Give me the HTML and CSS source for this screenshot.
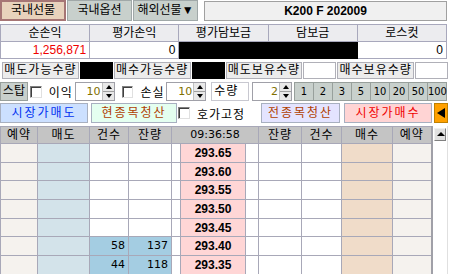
FILE: index.html
```html
<!DOCTYPE html>
<html lang="ko">
<head>
  <meta charset="UTF-8" />
  <title>K200 F 주문</title>
  <link rel="stylesheet" href="styles.css">
</head>
<body>
<div class="screen">

  <div class="tabs">
    <div class="tab tab-on">국내선물</div>
    <div class="tab">국내옵션</div>
    <div class="tab">해외선물▼</div>
    <div class="code">K200 F 202009</div>
  </div>

  <table class="summary">
    <tr><th>순손익</th><th>평가손익</th><th>평가담보금</th><th>담보금</th><th>로스컷</th></tr>
    <tr>
      <td class="loss">1,256,871</td>
      <td>0</td>
      <td class="masked" colspan="2"></td>
      <td>0</td>
    </tr>
  </table>

  <div class="qty-row">
    <span class="qty-label">매도가능수량</span><span class="qty-box masked"></span>
    <span class="qty-label">매수가능수량</span><span class="qty-box masked"></span>
    <span class="qty-label">매도보유수량</span><span class="qty-box"></span>
    <span class="qty-label">매수보유수량</span><span class="qty-box"></span>
  </div>

  <div class="stop-row">
    <div class="btn-gray stop">스탑</div>
    <span class="check"></span>
    <span class="txt">이익</span>
    <span class="spin"><span class="spin-val">10</span><span class="spin-btn"><i class="up"></i><i class="down"></i></span></span>
    <span class="check"></span>
    <span class="txt">손실</span>
    <span class="spin"><span class="spin-val">10</span><span class="spin-btn"><i class="up"></i><i class="down"></i></span></span>
    <span class="qty-name">수량</span>
    <span class="spin"><span class="spin-val">2</span><span class="spin-btn"><i class="up"></i><i class="down"></i></span></span>
    <div class="qty-keys">
      <div class="btn-gray key">1</div>
      <div class="btn-gray key">2</div>
      <div class="btn-gray key">3</div>
      <div class="btn-gray key">5</div>
      <div class="btn-gray key">10</div>
      <div class="btn-gray key">20</div>
      <div class="btn-gray key">50</div>
      <div class="btn-gray key">100</div>
    </div>
  </div>

  <div class="order-row">
    <div class="order sell-market">시장가매도</div>
    <div class="order clear-one">현종목청산</div>
    <span class="check"></span>
    <span class="txt fix">호가고정</span>
    <div class="order clear-all">전종목청산</div>
    <div class="order buy-market">시장가매수</div>
    <div class="arrow-btn"><i></i></div>
  </div>

  <div class="book-wrap">
    <table class="book">
      <colgroup>
        <col style="width:37px"><col style="width:52px"><col style="width:39px"><col style="width:43px">
        <col style="width:9px"><col style="width:65px"><col style="width:13px">
        <col style="width:43px"><col style="width:40px"><col style="width:51px"><col style="width:39px">
      </colgroup>
      <tr>
        <th>예약</th><th>매도</th><th>건수</th><th>잔량</th>
        <th colspan="3" class="time">09:36:58</th>
        <th>잔량</th><th>건수</th><th>매수</th><th>예약</th>
      </tr>
      <tr><td class="rsv"></td><td class="ask"></td><td></td><td></td><td></td><td class="price">293.65</td><td></td><td></td><td></td><td class="bid"></td><td class="rsv"></td></tr>
      <tr><td class="rsv"></td><td class="ask"></td><td></td><td></td><td></td><td class="price">293.60</td><td></td><td></td><td></td><td class="bid"></td><td class="rsv"></td></tr>
      <tr><td class="rsv"></td><td class="ask"></td><td></td><td></td><td></td><td class="price">293.55</td><td></td><td></td><td></td><td class="bid"></td><td class="rsv"></td></tr>
      <tr><td class="rsv"></td><td class="ask"></td><td></td><td></td><td></td><td class="price">293.50</td><td></td><td></td><td></td><td class="bid"></td><td class="rsv"></td></tr>
      <tr><td class="rsv"></td><td class="ask"></td><td></td><td></td><td></td><td class="price">293.45</td><td></td><td></td><td></td><td class="bid"></td><td class="rsv"></td></tr>
      <tr><td class="rsv"></td><td class="ask"></td><td class="fill">58</td><td class="fill">137</td><td></td><td class="price">293.40</td><td></td><td></td><td></td><td class="bid"></td><td class="rsv"></td></tr>
      <tr><td class="rsv"></td><td class="ask"></td><td class="fill">44</td><td class="fill">118</td><td></td><td class="price">293.35</td><td></td><td></td><td></td><td class="bid"></td><td class="rsv"></td></tr>
    </table>
    <div class="scroll"><div class="scroll-up"><i></i></div></div>
  </div>

</div>
</body>
</html>
```

FILE: styles.css
```css
* {
  box-sizing: border-box;
}

body {
  margin: 0;
  background-color: #fff;
  font-family: "Liberation Sans", "Noto Sans CJK KR", sans-serif;
  font-size: 12px;
  color: #000;
}

.screen {
  width: 449px;
  height: 274px;
  overflow: hidden;
}

/* top tabs */
.tabs {
  display: flex;
  gap: 1px;
  height: 22px;
}

.tab {
  width: 65px;
  height: 21px;
  border: 1px solid #a0a8a8;
  background-color: #c8d0cc;
  text-align: center;
  line-height: 19px;
}

.tab-on {
  width: 66px;
  border: 2px solid #a67575;
  background-color: #e8d2bc;
  line-height: 17px;
}

.code {
  margin-left: auto;
  margin-right: 2px;
  margin-top: 1px;
  width: 243px;
  height: 20px;
  border: 1px solid #a0a0a0;
  background-color: #f0f0f0;
  font-weight: bold;
  text-align: center;
  line-height: 18px;
}

/* summary */
.summary {
  margin-top: 2px;
  width: 447px;
  border-collapse: collapse;
  table-layout: fixed;
}

.summary th,
.summary td {
  border: 1px solid #a8a8bc;
  padding: 0 3px;
  height: 17px;
  line-height: 15px;
  font-weight: normal;
}

.summary th {
  background-color: #ececef;
  text-align: center;
}

.summary td {
  text-align: right;
}

.summary td.loss {
  color: #f00000;
}

.masked {
  background-color: #000;
}

.summary td.masked {
  border-color: #000;
}

/* quantity labels */
.qty-row {
  display: flex;
  margin-top: 3px;
  padding-left: 2px;
  height: 17px;
}

.qty-label {
  width: 77px;
  height: 17px;
  border: 1px solid #b0b0b8;
  background-color: #ececec;
  text-align: center;
  line-height: 15px;
  letter-spacing: 1px;
}

.qty-box {
  width: 33px;
  height: 17px;
  margin: 0 1px 0 1px;
  border: 1px solid #b0b0b8;
}

.qty-box.masked {
  border-color: #000;
}

/* stop row */
.stop-row {
  display: flex;
  align-items: center;
  margin-top: 3px;
  height: 19px;
}

.btn-gray {
  border: 1px solid #98a09c;
  background-color: #c8d0cc;
  text-align: center;
}

.stop {
  width: 28px;
  height: 19px;
  line-height: 17px;
}

.check {
  display: inline-block;
  width: 12px;
  height: 12px;
  margin-left: 2px;
  border: 1px solid #808080;
  border-right-color: #e0e0e0;
  border-bottom-color: #e0e0e0;
  background-color: #fff;
  box-shadow: inset 1px 1px 0 #404040;
}

.txt {
  margin-left: 7px;
  width: 26px;
  letter-spacing: 1px;
}

.spin {
  display: flex;
  height: 19px;
  border: 1px solid #a0a0a8;
}

.spin-val {
  width: 26px;
  padding-right: 1px;
  text-align: right;
  line-height: 17px;
  color: #807000;
  font-family: "DejaVu Sans", sans-serif;
  font-size: 11px;
}

.spin-btn {
  display: flex;
  flex-direction: column;
  width: 12px;
  border-left: 1px solid #c0c0c0;
}

.spin-btn i {
  flex: 1;
  position: relative;
  background-color: #e8e8e8;
}

.spin-btn i.up {
  border-bottom: 1px solid #a0a0a0;
}

.spin-btn i::after {
  content: "";
  position: absolute;
  left: 3px;
  top: 2px;
  border-left: 3px solid transparent;
  border-right: 3px solid transparent;
}

.spin-btn i.up::after {
  border-bottom: 4px solid #000;
}

.spin-btn i.down::after {
  border-top: 4px solid #000;
}

.stop-row .spin {
  margin-left: 3px;
  margin-right: 5px;
}

.stop-row .txt + .spin {
  margin-left: 0;
}

.qty-name {
  width: 38px;
  height: 19px;
  padding-left: 2px;
  border: 1px solid #c8c8d0;
  line-height: 17px;
  letter-spacing: 1px;
}

.stop-row .qty-name + .spin {
  margin-left: 3px;
  margin-right: 3px;
}

.qty-keys {
  display: flex;
  margin-left: auto;
  margin-right: 2px;
}

.key {
  width: 20px;
  height: 19px;
  margin-left: -1px;
  line-height: 17px;
  font-family: "DejaVu Sans Condensed", "DejaVu Sans", sans-serif;
  font-size: 11px;
}

/* order buttons */
.order-row {
  display: flex;
  align-items: center;
  margin-top: 2px;
  height: 20px;
}

.order {
  height: 20px;
  border: 1px solid #a8b0c0;
  text-align: center;
  line-height: 18px;
  letter-spacing: 2px;
}

.sell-market {
  width: 88px;
  background-color: #cce0ff;
  color: #0030f0;
}

.clear-one {
  width: 86px;
  margin-left: 3px;
  margin-right: 0;
  background-color: #e4fff0;
  color: #b04000;
}

.order-row .check {
  margin-left: 1px;
}

.fix {
  margin-left: 7px;
  width: 64px;
}

.clear-all {
  width: 79px;
  background-color: #e4e4ff;
  color: #b04000;
}

.buy-market {
  width: 88px;
  margin-left: 4px;
  background-color: #ffd4d4;
  color: #f00000;
}

.arrow-btn {
  position: relative;
  width: 14px;
  height: 20px;
  margin-left: 2px;
  border: 1px solid #c08000;
  background-color: #ffa000;
}

.arrow-btn i {
  position: absolute;
  left: 2px;
  top: 4px;
  border-top: 5px solid transparent;
  border-bottom: 5px solid transparent;
  border-right: 8px solid #000;
}

/* order book */
.book-wrap {
  display: flex;
  margin-top: 3px;
}

.book {
  width: 432px;
  border-collapse: collapse;
  table-layout: fixed;
  border-right: 2px solid #a0a0a8;
}

.book th,
.book td {
  border: 1px solid #a8a8b8;
  padding: 0 3px;
  height: 18.7px;
  line-height: 16px;
}

.book th {
  height: 17px;
  background-color: #c4c4c4;
  font-weight: normal;
  text-align: center;
  letter-spacing: 1px;
}

.book th.time {
  font-family: "DejaVu Sans", sans-serif;
  font-size: 11px;
  letter-spacing: 0;
}

.book td {
  text-align: right;
  font-family: "DejaVu Sans", sans-serif;
  font-size: 11px;
}

.book td.rsv {
  background-color: #f5f2ee;
}

.book td.ask {
  background-color: #d3e3ea;
}

.book td.bid {
  background-color: #f0dcc9;
}

.book td.fill {
  background-color: #a4cde2;
}

.book td.price {
  background-color: #ffd6d6;
  text-align: center;
  font-family: "Liberation Sans", sans-serif;
  font-weight: bold;
  font-size: 12px;
}

.scroll {
  flex: 1;
  margin-right: 2px;
  padding: 2px 1px 0 1px;
  border-right: 1px solid #e0e0e0;
}

.scroll-up {
  position: relative;
  width: 12px;
  height: 13px;
  border: 1px solid #808080;
  border-top-color: #f0f0f0;
  border-left-color: #f0f0f0;
  background-color: #e0e0e0;
}

.scroll-up i {
  position: absolute;
  left: 2px;
  top: 3px;
  border-left: 4px solid transparent;
  border-right: 4px solid transparent;
  border-bottom: 4px solid #000;
}
```
